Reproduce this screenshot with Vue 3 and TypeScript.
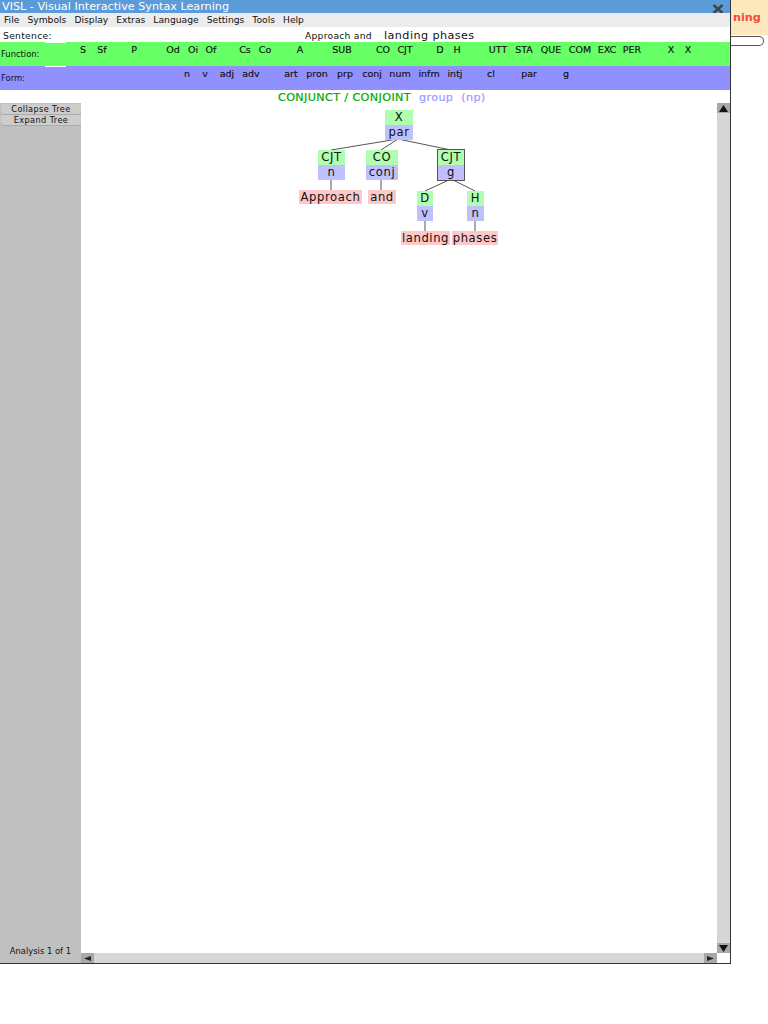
<script setup lang="ts">
interface Sym { t: string; c: number; m?: number }
const withMargins = (list: [string, number][]): Sym[] =>
  list.map(([t, c], i) => ({ t, c, m: i === 0 ? c : c - list[i - 1][1] }))

const menus = ['File', 'Symbols', 'Display', 'Extras', 'Language', 'Settings', 'Tools', 'Help']
const functions = withMargins([
  ['S', 83], ['Sf', 102], ['P', 134], ['Od', 173], ['Oi', 193], ['Of', 211], ['Cs', 245], ['Co', 265],
  ['A', 300], ['SUB', 342], ['CO', 383], ['CJT', 405], ['D', 440], ['H', 457], ['UTT', 498], ['STA', 524],
  ['QUE', 551], ['COM', 580], ['EXC', 607], ['PER', 632], ['X', 671], ['X', 688],
])
const forms = withMargins([
  ['n', 187], ['v', 205], ['adj', 227], ['adv', 251], ['art', 291], ['pron', 317], ['prp', 345],
  ['conj', 372], ['num', 400], ['infm', 429], ['intj', 455], ['cl', 491], ['par', 529], ['g', 566],
])

interface TreeNode { x: number; y: number; w: number; fn: string; form: string; boxed?: boolean }
const nodes: TreeNode[] = [
  { x: 385, y: 110, w: 28, fn: 'X', form: 'par' },
  { x: 318, y: 150, w: 27, fn: 'CJT', form: 'n' },
  { x: 366, y: 150, w: 32, fn: 'CO', form: 'conj' },
  { x: 438, y: 150, w: 26, fn: 'CJT', form: 'g', boxed: true },
  { x: 417, y: 191, w: 16, fn: 'D', form: 'v' },
  { x: 467, y: 191, w: 17, fn: 'H', form: 'n' },
]
const leaves = [
  { x: 299, y: 190, w: 63, t: 'Approach' },
  { x: 368, y: 190, w: 28, t: 'and' },
  { x: 401, y: 231, w: 49, t: 'landing' },
  { x: 452, y: 231, w: 46, t: 'phases' },
]
const lines = [
  [398, 139, 331, 150], [398, 139, 381, 150], [398, 139, 451, 150],
  [331, 180, 331, 190], [381, 180, 381, 190],
  [451, 179, 425, 191], [451, 179, 475, 191],
  [425, 221, 425, 231], [475, 221, 475, 231],
]
const px = (n: number) => `${n}px`
</script>

<template>
  <div class="page">
    <div class="window">
      <div class="title">
        <span>VISL - Visual Interactive Syntax Learning</span>
        <svg class="close" viewBox="0 0 12 10" width="12" height="10">
          <path d="M1.5 1 L10.5 9 M10.5 1 L1.5 9" stroke="#444" stroke-width="2.6" />
        </svg>
      </div>
      <nav class="menu">
        <span v-for="m in menus" :key="m">{{ m }}</span>
      </nav>
      <div class="sentence">
        <span class="sent-label">Sentence:</span>
        <span class="sent-a">Approach and</span>
        <span class="sent-b">landing phases</span>
      </div>
      <div class="bar green">
        <span class="bar-label">Function:</span>
        <div class="notch"></div>
        <div class="syms">
          <span v-for="(s, i) in functions" :key="i" class="sym" :style="{ marginLeft: px(s.m!) }">{{ s.t }}</span>
        </div>
      </div>
      <div class="bar blue">
        <span class="bar-label">Form:</span>
        <div class="notch"></div>
        <div class="syms">
          <span v-for="(s, i) in forms" :key="i" class="sym" :style="{ marginLeft: px(s.m!) }">{{ s.t }}</span>
        </div>
      </div>
      <div class="heading">
        <span class="h-green">CONJUNCT / CONJOINT</span>
        <span class="h-blue">group&nbsp; (np)</span>
      </div>
      <div class="main">
        <aside class="side">
          <div class="buttons">
            <button class="btn">Collapse Tree</button>
            <button class="btn">Expand Tree</button>
          </div>
          <div class="analysis">Analysis 1 of 1</div>
        </aside>
        <div class="content">
          <div class="canvas-row">
            <div class="canvas">
              <svg class="edges" width="636" height="850" viewBox="81 103 636 850">
                <line v-for="(l, i) in lines" :key="i" :x1="l[0]" :y1="l[1]" :x2="l[2]" :y2="l[3]" stroke="#555" stroke-width="1" />
              </svg>
              <div
                v-for="(n, i) in nodes"
                :key="i"
                class="node"
                :class="{ boxed: n.boxed }"
                :style="{ left: px(n.x - 81), top: px(n.y - 103), width: px(n.w) }"
              >
                <div class="nf">{{ n.fn }}</div>
                <div class="nm">{{ n.form }}</div>
              </div>
              <div
                v-for="l in leaves"
                :key="l.t"
                class="leaf"
                :style="{ left: px(l.x - 81), top: px(l.y - 103), width: px(l.w) }"
              >{{ l.t }}</div>
            </div>
            <div class="vscroll">
              <div class="arrow"><svg width="9" height="7" viewBox="0 0 9 7"><path d="M4.5 0 L9 7 H0 Z" fill="#111" /></svg></div>
              <div class="arrow"><svg width="9" height="7" viewBox="0 0 9 7"><path d="M4.5 7 L9 0 H0 Z" fill="#111" /></svg></div>
            </div>
          </div>
          <div class="hscroll">
            <div class="harrow"><svg width="7" height="5" viewBox="0 0 7 5"><path d="M0 2.5 L7 0 V5 Z" fill="#222" /></svg></div>
            <div class="track"></div>
            <div class="harrow"><svg width="7" height="5" viewBox="0 0 7 5"><path d="M7 2.5 L0 0 V5 Z" fill="#222" /></svg></div>
            <div class="corner"></div>
          </div>
        </div>
      </div>
    </div>
    <div class="behind">
      <div class="warning"><span>ning</span></div>
      <div class="pill"></div>
    </div>
  </div>
</template>

<style scoped>
.page {
  display: flex;
  width: 768px;
  height: 1024px;
  background: #fff;
  font-family: "DejaVu Sans", sans-serif;
  color: #111;
  overflow: hidden;
}
.window {
  width: 730px;
  flex: none;
  border-right: 1px solid #333;
  border-bottom: 1px solid #333;
  display: flex;
  flex-direction: column;
  background: #fff;
  height: 963px;
}
.title {
  height: 13px;
  background: #5b9bd9;
  color: #fff;
  font-size: 11.2px;
  line-height: 13px;
  padding-left: 2px;
  display: flex;
  justify-content: space-between;
  align-items: flex-start;
  flex: none;
}
.close { margin: 4px 6px 0 0; }
.menu {
  height: 14px;
  background: #ececec;
  display: flex;
  gap: 8px;
  padding-left: 4px;
  font-size: 9.2px;
  line-height: 14px;
  flex: none;
}
.sentence {
  height: 15px;
  display: flex;
  align-items: center;
  flex: none;
  font-size: 9.2px;
  padding-top: 1px;
  box-sizing: border-box;
}
.sent-label { margin-left: 3px; width: 302px; letter-spacing: 0.3px; }
.sent-a { width: 79px; letter-spacing: 0.25px; }
.sent-b { font-size: 11.2px; letter-spacing: 0.43px; }
.bar {
  height: 24px;
  position: relative;
  flex: none;
}
.green { background: #66ff66; }
.blue { background: #9090ff; }
.bar-label {
  position: absolute;
  left: 1px;
  top: 6px;
  font-size: 8.4px;
  line-height: 12px;
}
.notch {
  position: absolute;
  left: 45px;
  width: 21px;
  height: 1px;
  background: #fff;
  top: 0;
}
.syms {
  display: flex;
  height: 15px;
  align-items: center;
}
.sym {
  width: 0;
  display: flex;
  justify-content: center;
  font-size: 9.5px;
  white-space: nowrap;
  flex: none;
  -webkit-text-stroke: 0.15px #111;
}
.heading {
  height: 13px;
  flex: none;
  display: flex;
  gap: 8px;
  padding-left: 278px;
  font-size: 11.2px;
  line-height: 15px;
  letter-spacing: 0.37px;
}
.h-green { color: #00a800; -webkit-text-stroke: 0.2px #00a800; }
.h-blue { color: #9a9aff; -webkit-text-stroke: 0.2px #9a9aff; }
.main {
  flex: 1;
  display: flex;
  min-height: 0;
}
.side {
  width: 81px;
  flex: none;
  background: #c0c0c0;
  display: flex;
  flex-direction: column;
  justify-content: space-between;
}
.buttons {
  display: flex;
  flex-direction: column;
  padding-top: 1px;
}
.btn {
  appearance: none;
  border: none;
  margin: 0 0 0 1px;
  padding: 0;
  width: 80px;
  height: 11px;
  border-radius: 3px;
  background: #cdcdcd;
  box-shadow: inset 0 -1px 0 #aaa;
  font-family: inherit;
  font-size: 8.2px;
  letter-spacing: 0.38px;
  line-height: 11px;
  color: #111;
}
.analysis {
  font-size: 8.4px;
  line-height: 10px;
  text-align: right;
  padding: 0 10px 7px 0;
}
.content {
  flex: 1;
  display: flex;
  flex-direction: column;
  min-width: 0;
}
.canvas-row {
  flex: 1;
  display: flex;
  min-height: 0;
}
.canvas {
  flex: 1;
  position: relative;
}
.edges {
  position: absolute;
  left: 0;
  top: 0;
}
.node {
  position: absolute;
  text-align: center;
  font-size: 11.6px;
  letter-spacing: 0.6px;
  line-height: 15px;
}
.nf { background: #b0ffb0; height: 15px; }
.nm { background: #c0c0ff; height: 15px; }
.boxed { outline: 1px solid #555; }
.leaf {
  position: absolute;
  height: 14px;
  background: #ffc8c8;
  font-size: 11.6px;
  letter-spacing: 0.6px;
  line-height: 15px;
  text-align: center;
  white-space: nowrap;
}
.vscroll {
  width: 13px;
  flex: none;
  background: #d6d6d6;
  display: flex;
  flex-direction: column;
  justify-content: space-between;
}
.arrow {
  height: 10px;
  background: #a8a8a8;
  display: flex;
  align-items: center;
  justify-content: center;
}
.hscroll {
  height: 10px;
  flex: none;
  display: flex;
}
.track {
  flex: 1;
  background: #d6d6d6;
}
.harrow {
  width: 13px;
  background: #a8a8a8;
  display: flex;
  align-items: center;
  justify-content: center;
}
.corner {
  width: 13px;
  background: #fff;
}
.behind {
  flex: 1;
  min-width: 0;
}
.warning {
  height: 35px;
  background: #fde8bd;
  color: #f04a3c;
  font-size: 11.2px;
  font-weight: bold;
  line-height: 35px;
  padding-left: 2px;
  overflow: hidden;
}
.pill {
  height: 8px;
  width: 32px;
  margin-top: 1px;
  border: 1px solid #555;
  border-left: none;
  border-radius: 0 5px 5px 0;
}
</style>

<style>
html, body { margin: 0; background: #fff; }
</style>
